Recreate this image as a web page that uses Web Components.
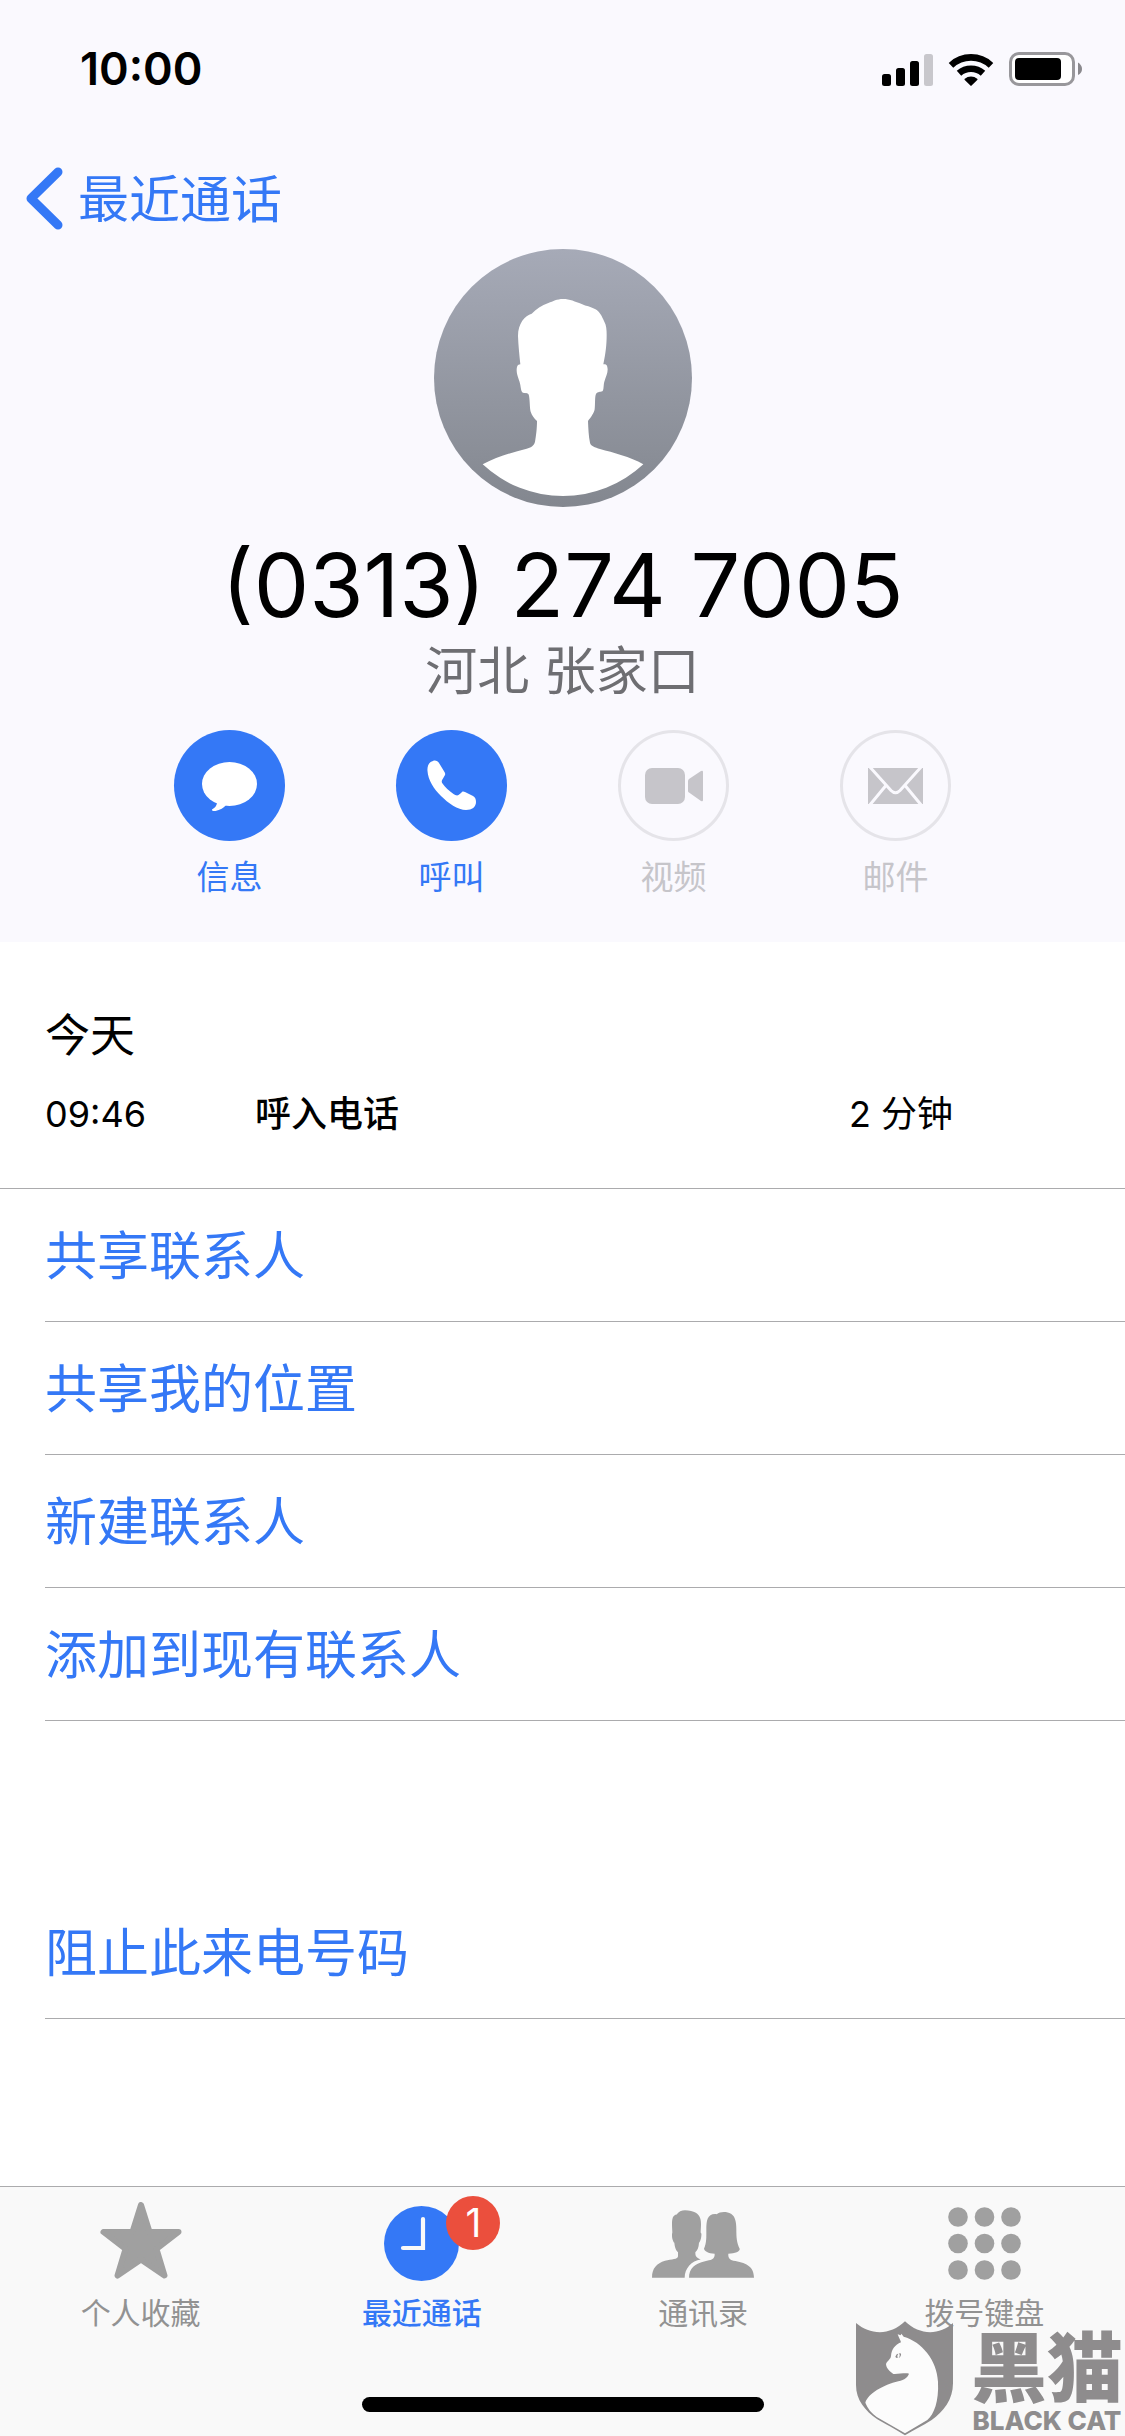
<!DOCTYPE html>
<html lang="zh-CN">
<head>
<meta charset="utf-8">
<meta name="viewport" content="width=device-width, initial-scale=1">
<title>最近通话</title>
<style>
	:root {
		--blue: #3478f6;
		--line: #ababad;
		--header: #faf9fe;
		--bar: #f9f9f9;
		--muted: #929292;
		--disabled: #c6c5ca;
	}
	body {
		margin: 0;
		background: #fff;
		color: #000;
		font-family: Inter, "Noto Sans CJK SC", sans-serif;
	}
</style>
</head>
<body>
<phone-screen>
	<contact-header slot="header" phone="(0313) 274 7005" place="河北 张家口">
		<status-bar slot="status" time="10:00"></status-bar>
		<contact-action icon="message">信息</contact-action>
		<contact-action icon="call">呼叫</contact-action>
		<contact-action icon="video" disabled>视频</contact-action>
		<contact-action icon="mail" disabled>邮件</contact-action>
	</contact-header>

	<call-log day="今天" time="09:46" type="呼入电话" duration="2 分钟"></call-log>
	<action-list>
		<action-row>共享联系人</action-row>
		<action-row>共享我的位置</action-row>
		<action-row>新建联系人</action-row>
		<action-row>添加到现有联系人</action-row>
	</action-list>
	<action-list separate>
		<action-row>阻止此来电号码</action-row>
	</action-list>

	<tab-bar slot="footer">
		<tab-item icon="star">个人收藏</tab-item>
		<tab-item icon="clock" badge="1" active>最近通话</tab-item>
		<tab-item icon="people">通讯录</tab-item>
		<tab-item icon="keypad">拨号键盘</tab-item>
	</tab-bar>
	<brand-mark slot="mark" name="黑猫" latin="BLACK CAT"></brand-mark>
</phone-screen>

<script>
const ACTION_ICONS = {
	message: /* html */ `
		<svg viewBox="0 0 111 111" fill="currentColor" aria-hidden="true">
			<ellipse cx="55.5" cy="54" rx="27.5" ry="22"/>
			<path d="M43 71C43.500 75 41 78 38 79.500C37.500 81 40 81.200 41.500 81C46 80 50 78 52 75Z"/>
		</svg>`,
	call: /* html */ `
		<svg viewBox="0 0 111 111" fill="currentColor" aria-hidden="true">
			<path d="M37 31C33 32 31 36 31.500 41C32 50 38 59 45 66C52 73 62 80 70 80C76 80 80 77 80 72C80 69 79 67 77 66L69 62C67 61 66 61.500 65 63L62.500 65C61 66 59 65 57.500 64C53 61 49 57 46.500 53.500C45 51.500 46 50 47 48.500L49 45C49.500 44 49 43 48.500 42L43 33C42 31 39 30 37 31Z"/>
		</svg>`,
	video: /* html */ `
		<svg viewBox="0 0 111 111" fill="currentColor" aria-hidden="true">
			<rect x="27" y="38" width="40" height="36" rx="7"/>
			<path d="M70 51Q70 50 71 49L83 41Q85 40 85 42V70Q85 72 83 71L71 62.500Q70 62 70 61Z"/>
		</svg>`,
	mail: /* html */ `
		<svg viewBox="0 0 111 111" aria-hidden="true">
			<rect x="28" y="38" width="55" height="36" fill="currentColor"/>
			<path d="M29 36L51 60.500Q55.500 65 60 60.500L82 36M29 76L45.500 56M82 76L65.500 56" fill="none" stroke="#faf9fe" stroke-width="3"/>
		</svg>`
}

const TAB_ICONS = {
	star: /* html */ `
		<svg width="82" height="83" viewBox="0 0 82 83" aria-hidden="true">
			<path d="M41 3L49.500 30H78.500L56.500 47L64.500 73.500L41 57.500L17.500 73.500L25.500 47L3.500 30H32.500Z" fill="currentColor" stroke="currentColor" stroke-width="6" stroke-linejoin="round"/>
		</svg>`,
	clock: /* html */ `
		<svg width="75" height="75" viewBox="0 0 75 75" aria-hidden="true">
			<circle cx="37.5" cy="37.5" r="37.5" fill="currentColor"/>
			<path d="M39 13V42H19" fill="none" stroke="#f9f9f9" stroke-width="4.200" stroke-linecap="round"/>
		</svg>`,
	people: /* html */ `
		<svg width="102" height="68" viewBox="846 88 306 203" fill="currentColor" aria-hidden="true">
			<path d="M945 88C958 88 970 92 976 95C990 103 993 115 993 130C993 140 992 150 992 155C996 158 994 165 993 172C991 180 989 183 987 186C986 200 983 208 976 214C976 225 978 230 992 236C965 240 944 262 944 291H846C846 262 860 248 885 240C905 234 924 236 924 226V214C916 208 914 195 913 186C908 182 904 165 907 155C907 150 906 140 906 130C906 112 909 103 920 101C925 92 935 88 945 88Z"/>
			<path d="M1040 100C1050 92 1070 91 1083 99C1096 107 1099 125 1099 145C1099 170 1100 185 1109 204C1111 212 1095 218 1075 219C1074 230 1078 237 1090 240C1125 245 1152 255 1152 291H957C957 262 975 248 1005 241C1022 238 1035 237 1034 219C1015 218 1003 211 1002 204C1010 185 1009 170 1009 145C1009 120 1012 97 1040 100Z"/>
		</svg>`,
	keypad: /* html */ `
		<svg width="73" height="73" viewBox="0 0 73 73" fill="currentColor" aria-hidden="true">
			<circle cx="10" cy="10" r="9.800"/><circle cx="36.5" cy="10" r="9.800"/><circle cx="63" cy="10" r="9.800"/>
			<circle cx="10" cy="36.5" r="9.800"/><circle cx="36.5" cy="36.5" r="9.800"/><circle cx="63" cy="36.5" r="9.800"/>
			<circle cx="10" cy="63" r="9.800"/><circle cx="36.5" cy="63" r="9.800"/><circle cx="63" cy="63" r="9.800"/>
		</svg>`
}

class BaseElement extends HTMLElement {
	constructor() {
		super()
		this.attachShadow({ mode: 'open' })
	}

	connectedCallback() {
		this.shadowRoot.innerHTML = `<style>${this.constructor.styles}</style>${this.template()}`
	}

	attr(name) {
		return this.getAttribute(name) || ''
	}
}

class PhoneScreen extends BaseElement {
	static get styles() {
		return /* css */ `
    :host {
      display: flex;
      flex-direction: column;
      min-height: 100vh;
      position: relative;
    }
    main { flex: 1; }
    ::slotted(brand-mark) {
      position: absolute;
      right: 2px;
      bottom: 0;
    }
    `
	}

	template() {
		return /* html */ `
      <slot name="header"></slot>
      <main><slot></slot></main>
      <slot name="footer"></slot>
      <slot name="mark"></slot>
    `
	}
}

class StatusBar extends BaseElement {
	static get styles() {
		return /* css */ `
    :host {
      display: flex;
      justify-content: space-between;
      align-items: center;
      padding: 39px 43px 0 80px;
      font-size: 45px;
      line-height: 60px;
      font-weight: 600;
    }
    .icons {
      display: flex;
      align-items: center;
      gap: 15px;
    }
    svg { display: block; }
    `
	}

	template() {
		return /* html */ `
      <time>${this.attr('time')}</time>
      <div class="icons">
        <svg width="51" height="33" viewBox="0 0 51 33" aria-hidden="true">
          <rect y="21" width="9" height="12" rx="2.500"/>
          <rect x="14" y="15" width="9" height="18" rx="2.500"/>
          <rect x="28" y="8" width="9" height="25" rx="2.500"/>
          <rect x="42" y="1" width="9" height="32" rx="2.500" fill="#c8c7cc"/>
        </svg>
        <svg width="46" height="33" viewBox="324 96 138 99" aria-hidden="true">
          <path d="M333 133A88 88 0 0 1 453 133M357 157A54 54 0 0 1 429 157" fill="none" stroke="#000" stroke-width="20"/>
          <path d="M393 192L376 175A26 26 0 0 1 410 175Z" stroke="#000" stroke-width="5" stroke-linejoin="round"/>
        </svg>
        <svg width="73" height="34" viewBox="0 0 73 34" aria-hidden="true">
          <rect x="1.500" y="1.500" width="63" height="31" rx="8.500" fill="#fff" stroke="#98979b" stroke-width="3"/>
          <rect x="6" y="6" width="46" height="22" rx="4"/>
          <path d="M69 10.500Q73 13 73 17Q73 21 69 23Z" fill="#8a898d"/>
        </svg>
      </div>
    `
	}
}

class ContactHeader extends BaseElement {
	static get styles() {
		return /* css */ `
    :host {
      display: block;
      padding-bottom: 45px;
      background: var(--header);
    }
    nav {
      display: flex;
      padding: 68px 26px 19px;
    }
    a {
      display: flex;
      align-items: flex-end;
      gap: 15px;
      color: var(--blue);
      font-size: 51px;
      line-height: 60px;
      text-decoration: none;
    }
    .contact {
      display: flex;
      flex-direction: column;
      align-items: center;
    }
    h1 {
      margin: 28px 0 7px;
      font-size: 88px;
      line-height: 100px;
      font-weight: 400;
    }
    p {
      margin: 0;
      color: #6e6e72;
      font-size: 52px;
      line-height: 60px;
    }
    .actions {
      display: flex;
      justify-content: center;
      gap: 111px;
      margin-top: 28px;
    }
    `
	}

	template() {
		return /* html */ `
      <slot name="status"></slot>
      <nav>
        <a href="#recents">
          <svg width="37" height="63" viewBox="0 0 37 63" aria-hidden="true">
            <path d="M32 5L5 31.500L32 58" fill="none" stroke="currentColor" stroke-width="9" stroke-linecap="round" stroke-linejoin="round"/>
          </svg>
          <span>最近通话</span>
        </a>
      </nav>
      <div class="contact">
        <svg width="258" height="258" viewBox="102 57 774 774" aria-hidden="true">
          <defs>
            <linearGradient id="shade" x1="0" y1="0" x2="0" y2="1">
              <stop offset="0" stop-color="#a6aab7"/>
              <stop offset="1" stop-color="#83878f"/>
            </linearGradient>
          </defs>
          <circle cx="489" cy="444" r="387" fill="url(#shade)"/>
          <path fill="#fff" d="M489 207C470 207 460 214 445 219C425 226 408 238 395 251C375 256 354 280 354 318C355 345 358 375 361 403C352 404 350 410 350 422C351 440 359 450 361 465C363 480 365 489 372 489C382 490 386 490 387 497C390 515 389 535 392 545C396 556 402 565 411 573C411 595 408 620 405 635C402 648 392 653 380 656C335 668 290 680 248 703A353 353 0 0 0 730 703C690 680 640 668 600 657C585 652 572 648 570 638C566 620 565 595 564 573C572 563 583 548 584 538C586 520 584 500 588 492C594 484 600 487 607 484C612 480 610 465 613 455C618 440 623 430 623 418C622 404 618 403 610 403C617 370 620 345 620 315C620 300 619 285 613 275C605 258 600 245 585 237C570 229 560 229 545 222C525 215 510 207 489 207Z"/>
        </svg>
        <h1>${this.attr('phone')}</h1>
        <p>${this.attr('place')}</p>
      </div>
      <div class="actions"><slot></slot></div>
    `
	}
}

class ContactAction extends BaseElement {
	static get styles() {
		return /* css */ `
    :host { display: block; }
    button {
      display: flex;
      flex-direction: column;
      align-items: center;
      gap: 16px;
      padding: 0;
      border: none;
      background: none;
      color: var(--blue);
      font: inherit;
      font-size: 33px;
      line-height: 40px;
      cursor: pointer;
    }
    .circle {
      width: 111px;
      height: 111px;
      border-radius: 50%;
      background: var(--blue);
      color: #fff;
    }
    svg { display: block; }
    button:disabled {
      color: var(--disabled);
      cursor: default;
    }
    button:disabled .circle {
      background: none;
      box-shadow: inset 0 0 0 3px #e5e4e9;
      color: var(--disabled);
    }
    `
	}

	template() {
		return /* html */ `
      <button type="button" ${this.hasAttribute('disabled') ? 'disabled' : ''}>
        <span class="circle">${ACTION_ICONS[this.attr('icon')]}</span>
        <span><slot></slot></span>
      </button>
    `
	}
}

class CallLog extends BaseElement {
	static get styles() {
		return /* css */ `
    :host {
      display: block;
      padding: 64px 0 50px 45px;
      border-bottom: 1px solid var(--line);
    }
    h2 {
      margin: 0 0 24px;
      font-size: 45px;
      line-height: 60px;
      font-weight: 400;
    }
    table {
      width: 100%;
      border-collapse: collapse;
      table-layout: fixed;
      font-size: 36px;
      line-height: 48px;
    }
    td, th {
      padding: 0;
      text-align: left;
      font-weight: 400;
    }
    .time { width: 210px; }
    .type { font-weight: 500; }
    .duration { width: 276px; }
    `
	}

	template() {
		return /* html */ `
      <h2>${this.attr('day')}</h2>
      <table>
        <tr>
          <td class="time">${this.attr('time')}</td>
          <th class="type" scope="row">${this.attr('type')}</th>
          <td class="duration">${this.attr('duration')}</td>
        </tr>
      </table>
    `
	}
}

class ActionList extends BaseElement {
	static get styles() {
		return /* css */ `
    :host {
      display: block;
      padding-left: 45px;
    }
    :host([separate]) { margin-top: 165px; }
    `
	}

	template() {
		return `<slot></slot>`
	}
}

class ActionRow extends BaseElement {
	static get styles() {
		return /* css */ `
    :host {
      display: block;
      border-bottom: 1px solid var(--line);
    }
    button {
      display: block;
      width: 100%;
      padding: 38px 0 34px;
      border: none;
      background: none;
      color: var(--blue);
      font: inherit;
      font-size: 52px;
      line-height: 60px;
      text-align: left;
      cursor: pointer;
    }
    `
	}

	template() {
		return `<button type="button"><slot></slot></button>`
	}
}

class TabBar extends BaseElement {
	static get styles() {
		return /* css */ `
    :host {
      display: block;
      padding-bottom: 24px;
      border-top: 1px solid var(--line);
      background: var(--bar);
    }
    nav {
      display: grid;
      grid-template-columns: repeat(4, 1fr);
      padding-top: 13px;
    }
    .home {
      width: 402px;
      height: 15px;
      margin: 64px auto 0;
      border-radius: 8px;
      background: #000;
    }
    `
	}

	template() {
		return /* html */ `
      <nav><slot></slot></nav>
      <div class="home"></div>
    `
	}
}

class TabItem extends BaseElement {
	static get styles() {
		return /* css */ `
    :host { display: block; }
    a {
      display: flex;
      flex-direction: column;
      align-items: center;
      gap: 6px;
      color: var(--muted);
      font-size: 30px;
      line-height: 40px;
      text-decoration: none;
    }
    .icon {
      display: flex;
      align-items: center;
      position: relative;
      height: 87px;
      color: #a0a0a0;
    }
    :host([active]) a { font-weight: 500; }
    :host([active]) a, :host([active]) .icon { color: var(--blue); }
    .badge {
      position: absolute;
      top: -4px;
      left: 62px;
      width: 54px;
      height: 54px;
      border-radius: 50%;
      background: #eb4f3d;
      color: #fff;
      font-size: 39px;
      line-height: 54px;
      font-weight: 400;
      text-align: center;
    }
    `
	}

	template() {
		const badge = this.attr('badge')
		return /* html */ `
      <a href="#${this.attr('icon')}">
        <span class="icon">
          ${TAB_ICONS[this.attr('icon')]}
          ${badge ? `<span class="badge">${badge}</span>` : ''}
        </span>
        <span><slot></slot></span>
      </a>
    `
	}
}

class BrandMark extends BaseElement {
	static get styles() {
		return /* css */ `
    :host {
      display: flex;
      align-items: flex-end;
      gap: 18px;
      color: #8e8c8d;
    }
    svg { display: block; }
    .words {
      display: flex;
      flex-direction: column;
      align-items: center;
    }
    .name {
      font-size: 76px;
      line-height: 76px;
      font-weight: 900;
    }
    .latin {
      font-size: 26px;
      line-height: 30px;
      font-weight: 800;
      white-space: nowrap;
    }
    `
	}

	template() {
		return /* html */ `
      <svg width="97" height="115" viewBox="48 93 291 345" aria-hidden="true">
        <path fill="currentColor" d="M48 99C90 135 150 138 195 94C240 138 300 135 339 99V280C339 330 310 365 275 390C250 406 220 421 195 436C170 421 130 398 112 388C75 362 48 330 48 285Z"/>
        <path fill="#fcfcfc" d="M173 133L182 136L184 131L191 140C245 155 291 210 294 275C297 335 282 372 262 390L195 430L110 381C95 370 82 355 76 338C85 310 130 285 175 274C195 269 203 262 207 251C195 248 175 253 160 252C150 244 139 236 138 222C142 212 152 208 153 198C155 178 165 165 183 157C180 148 176 141 173 133Z"/>
        <path fill="currentColor" d="M166 200Q169 190 175 191Q170 196 173 204Q168 205 166 200ZM178 189Q186 190 182 198Q180 203 176 204Q181 197 178 189Z"/>
      </svg>
      <div class="words">
        <span class="name">${this.attr('name')}</span>
        <span class="latin">${this.attr('latin')}</span>
      </div>
    `
	}
}

customElements.define('phone-screen', PhoneScreen)
customElements.define('status-bar', StatusBar)
customElements.define('contact-header', ContactHeader)
customElements.define('contact-action', ContactAction)
customElements.define('call-log', CallLog)
customElements.define('action-list', ActionList)
customElements.define('action-row', ActionRow)
customElements.define('tab-bar', TabBar)
customElements.define('tab-item', TabItem)
customElements.define('brand-mark', BrandMark)
</script>
</body>
</html>
